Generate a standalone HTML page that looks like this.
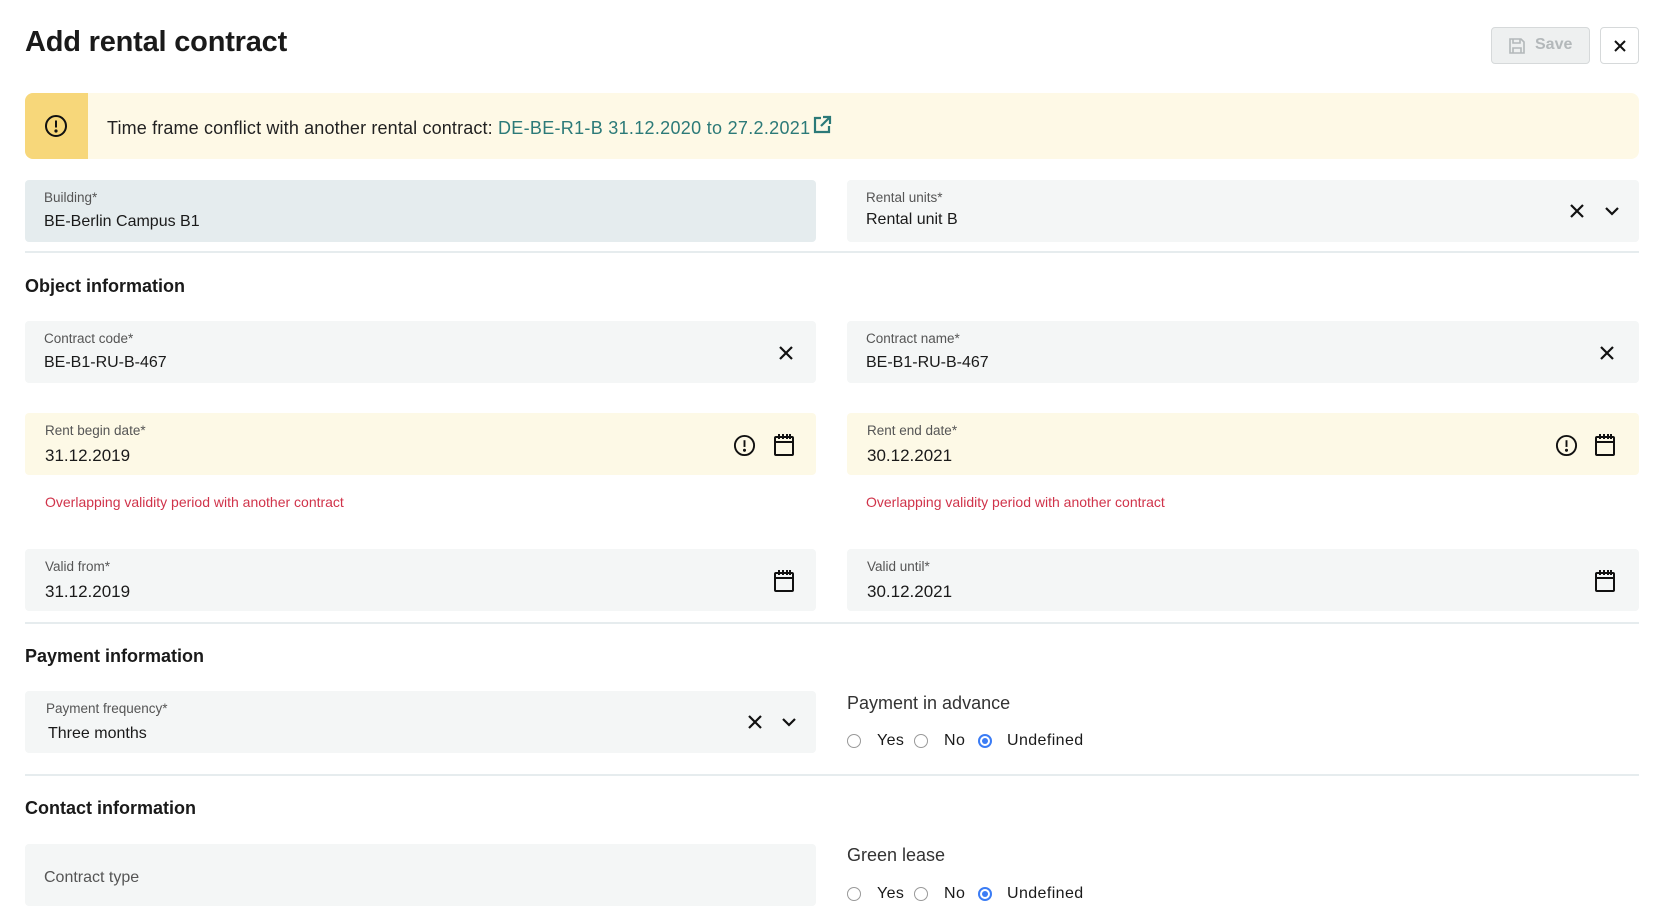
<!DOCTYPE html>
<html><head><meta charset="utf-8"><style>
*{box-sizing:border-box;margin:0;padding:0}
body{width:1662px;height:924px;background:#fff;font-family:"Liberation Sans",sans-serif;color:#1a1a1a;position:relative;overflow:hidden}
.a{position:absolute}
h1{position:absolute;left:25px;top:26px;font-size:29px;font-weight:bold;letter-spacing:-0.2px}
.btn{position:absolute;top:27px;height:37px;border-radius:4px}
.box{position:absolute;height:62px;border-radius:4px;background:#f4f6f6}
.box .l{position:absolute;left:19px;top:10px;font-size:13.5px;color:#555}
.box .v{position:absolute;left:19px;top:33px;font-size:16px;color:#1a1a1a}
.y{background:#fdf9e6}
.sep{position:absolute;left:25px;width:1614px;height:2px;background:#e6ecee}
.h{position:absolute;left:25px;font-size:18px;font-weight:bold}
.err{position:absolute;font-size:14px;color:#d0334a}
.ic{position:absolute}
.rl{position:absolute;font-size:18px;color:#333}
.rad{position:absolute;width:14px;height:14px;border:1px solid #999;border-radius:50%}
.rad.on{border:2px solid #3b7cf5}
.rad.on::after{content:"";position:absolute;left:2px;top:2px;width:6px;height:6px;border-radius:50%;background:#3b7cf5}
.rt{position:absolute;font-size:16px;color:#1a1a1a;letter-spacing:0.4px;font-weight:500}
</style></head><body>
<h1>Add rental contract</h1>
<div class="btn" style="left:1491px;width:99px;background:#eef0f0;border:1px solid #d6d9da;color:#b3b8ba;font-weight:bold;font-size:16px">
<svg class="ic" style="left:16px;top:9px" width="18" height="18" viewBox="0 0 18 18" fill="none" stroke="#b3b8ba" stroke-width="1.6"><path d="M2 2h11l3 3v11H2z"/><path d="M5 2v4h7V2M5 16v-5h8v5"/></svg>
<span class="a" style="left:43px;top:8px">Save</span></div>
<div class="btn" style="left:1600px;width:39px;border:1px solid #d6d9da;background:#fff">
<svg class="ic" style="left:13px;top:12px" width="12" height="12" viewBox="0 0 12 12" stroke="#111" stroke-width="2"><path d="M1 1l10 10M11 1L1 11"/></svg></div>

<div class="a" style="left:25px;top:93px;width:1614px;height:66px;background:#fef9e6;border-radius:8px;overflow:hidden">
<div class="a" style="left:0;top:0;width:63px;height:66px;background:#f7d77a"></div>
<svg class="ic" style="left:19px;top:21px" width="24" height="24" viewBox="0 0 24 24" fill="none" stroke="#111" stroke-width="2"><circle cx="12" cy="12" r="10"/><path d="M12 6.5v7"/><circle cx="12" cy="17" r=".6" fill="#111"/></svg>
<div class="a" style="left:82px;top:22px;font-size:18px;color:#222;white-space:nowrap;letter-spacing:0.15px">Time frame conflict with another rental contract: <span style="color:#2c7a78;letter-spacing:0.3px">DE-BE-R1-B 31.12.2020 to 27.2.2021</span><svg style="vertical-align:-1px;margin-left:2px" width="20" height="20" viewBox="0 0 20 20" fill="none" stroke="#2c7a78" stroke-width="2.2"><path d="M9 3H3v14h14v-6"/><path d="M11 2h7v7M18 2l-9 9"/></svg></div>
</div>

<div class="box" style="left:25px;top:180px;width:791px;background:#e5ecee"><span class="l">Building*</span><span class="v">BE-Berlin Campus B1</span></div>
<div class="box" style="left:847px;top:180px;width:792px"><span class="l">Rental units*</span><span class="v" style="top:31px">Rental unit B</span>
<svg class="ic" style="left:723px;top:24px" width="14" height="14" viewBox="0 0 14 14" stroke="#111" stroke-width="2.2"><path d="M1 1l12 12M13 1L1 13"/></svg>
<svg class="ic" style="left:757px;top:26px" width="16" height="10" viewBox="0 0 16 10" fill="none" stroke="#111" stroke-width="2.2"><path d="M2 2l6 6 6-6"/></svg></div>
<div class="sep" style="top:251px"></div>
<div class="h" style="top:276px">Object information</div>

<div class="box" style="left:25px;top:321px;width:791px"><span class="l">Contract code*</span><span class="v">BE-B1-RU-B-467</span>
<svg class="ic" style="left:754px;top:25px" width="14" height="14" viewBox="0 0 14 14" stroke="#111" stroke-width="2.2"><path d="M1 1l12 12M13 1L1 13"/></svg></div>
<div class="box" style="left:847px;top:321px;width:792px"><span class="l">Contract name*</span><span class="v">BE-B1-RU-B-467</span>
<svg class="ic" style="left:753px;top:25px" width="14" height="14" viewBox="0 0 14 14" stroke="#111" stroke-width="2.2"><path d="M1 1l12 12M13 1L1 13"/></svg></div>

<div class="box y" style="left:25px;top:413px;width:791px"><span class="l" style="left:20px">Rent begin date*</span><span class="v" style="left:20px;font-size:17px">31.12.2019</span>
<svg class="ic" style="left:708px;top:21px" width="23" height="23" viewBox="0 0 24 24" fill="none" stroke="#111" stroke-width="2"><circle cx="12" cy="12" r="10"/><path d="M12 6.5v7"/><circle cx="12" cy="17" r=".6" fill="#111"/></svg>
<svg class="ic" style="left:748px;top:20px" width="22" height="24" viewBox="0 0 22 24" fill="none" stroke="#111" stroke-width="2"><rect x="2" y="4" width="18" height="18" rx="1"/><path d="M2 9h18M6 1v5M10 1v5M14 1v5M17 1v5"/></svg></div>
<div class="box y" style="left:847px;top:413px;width:792px"><span class="l" style="left:20px">Rent end date*</span><span class="v" style="left:20px;font-size:17px">30.12.2021</span>
<svg class="ic" style="left:708px;top:21px" width="23" height="23" viewBox="0 0 24 24" fill="none" stroke="#111" stroke-width="2"><circle cx="12" cy="12" r="10"/><path d="M12 6.5v7"/><circle cx="12" cy="17" r=".6" fill="#111"/></svg>
<svg class="ic" style="left:747px;top:20px" width="22" height="24" viewBox="0 0 22 24" fill="none" stroke="#111" stroke-width="2"><rect x="2" y="4" width="18" height="18" rx="1"/><path d="M2 9h18M6 1v5M10 1v5M14 1v5M17 1v5"/></svg></div>
<div class="err" style="left:45px;top:494px">Overlapping validity period with another contract</div>
<div class="err" style="left:866px;top:494px">Overlapping validity period with another contract</div>

<div class="box" style="left:25px;top:549px;width:791px"><span class="l" style="left:20px">Valid from*</span><span class="v" style="left:20px;font-size:17px">31.12.2019</span>
<svg class="ic" style="left:748px;top:20px" width="22" height="24" viewBox="0 0 22 24" fill="none" stroke="#111" stroke-width="2"><rect x="2" y="4" width="18" height="18" rx="1"/><path d="M2 9h18M6 1v5M10 1v5M14 1v5M17 1v5"/></svg></div>
<div class="box" style="left:847px;top:549px;width:792px"><span class="l" style="left:20px">Valid until*</span><span class="v" style="left:20px;font-size:17px">30.12.2021</span>
<svg class="ic" style="left:747px;top:20px" width="22" height="24" viewBox="0 0 22 24" fill="none" stroke="#111" stroke-width="2"><rect x="2" y="4" width="18" height="18" rx="1"/><path d="M2 9h18M6 1v5M10 1v5M14 1v5M17 1v5"/></svg></div>
<div class="sep" style="top:622px"></div>
<div class="h" style="top:646px">Payment information</div>

<div class="box" style="left:25px;top:691px;width:791px"><span class="l" style="left:21px">Payment frequency*</span><span class="v" style="left:23px;top:34px">Three months</span>
<svg class="ic" style="left:723px;top:24px" width="14" height="14" viewBox="0 0 14 14" stroke="#111" stroke-width="2.2"><path d="M1 1l12 12M13 1L1 13"/></svg>
<svg class="ic" style="left:756px;top:26px" width="16" height="10" viewBox="0 0 16 10" fill="none" stroke="#111" stroke-width="2.2"><path d="M2 2l6 6 6-6"/></svg></div>
<div class="rl" style="left:847px;top:693px">Payment in advance</div>
<div class="rad" style="left:847px;top:734px"></div><div class="rt" style="left:877px;top:732px">Yes</div>
<div class="rad" style="left:914px;top:734px"></div><div class="rt" style="left:944px;top:732px">No</div>
<div class="rad on" style="left:978px;top:734px"></div><div class="rt" style="left:1007px;top:732px">Undefined</div>
<div class="sep" style="top:774px"></div>
<div class="h" style="top:798px">Contact information</div>

<div class="box" style="left:25px;top:844px;width:791px"><span class="l" style="top:25px;font-size:16px;color:#555">Contract type</span></div>
<div class="rl" style="left:847px;top:845px">Green lease</div>
<div class="rad" style="left:847px;top:887px"></div><div class="rt" style="left:877px;top:885px">Yes</div>
<div class="rad" style="left:914px;top:887px"></div><div class="rt" style="left:944px;top:885px">No</div>
<div class="rad on" style="left:978px;top:887px"></div><div class="rt" style="left:1007px;top:885px">Undefined</div>
</body></html>
